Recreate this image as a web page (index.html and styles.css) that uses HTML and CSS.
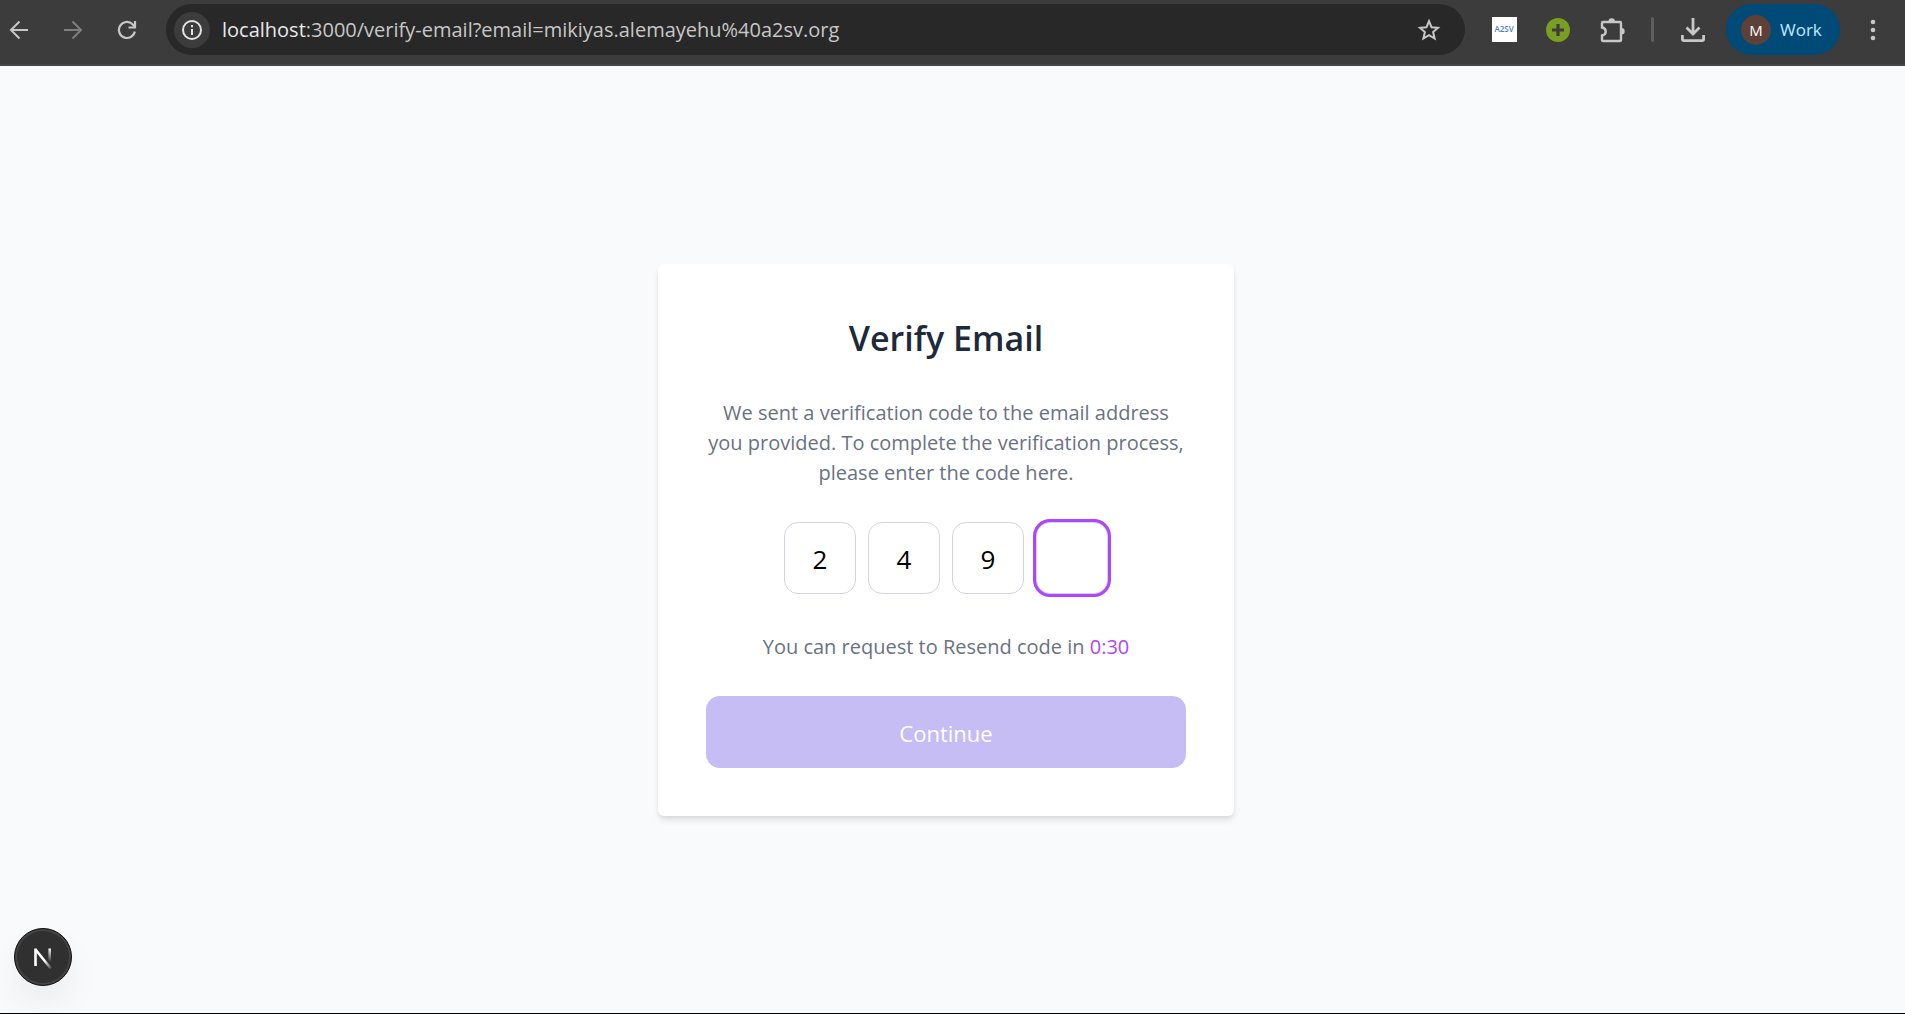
FILE: index.html
```html
<!DOCTYPE html>
<html lang="en">
<head>
<meta charset="utf-8">
<meta name="viewport" content="width=device-width, initial-scale=1">
<title>Verify Email</title>
<link rel="stylesheet" href="styles.css">
</head>
<body>
<header class="toolbar">
  <nav class="group" aria-label="Navigation">
    <button class="icon-button" type="button" aria-label="Back">
      <svg width="20" height="20" viewBox="0 0 20 20" fill="none" stroke="currentColor" stroke-width="2"><path d="M19 10H2.500M10.500 1.500L2 10l8.500 8.500"/></svg>
    </button>
    <button class="icon-button dim" type="button" aria-label="Forward">
      <svg width="20" height="20" viewBox="0 0 20 20" fill="none" stroke="currentColor" stroke-width="2"><path d="M1 10h16.500M9.500 1.500L18 10l-8.500 8.500"/></svg>
    </button>
    <button class="icon-button" type="button" aria-label="Reload">
      <svg width="20" height="20" viewBox="0 0 20 20" fill="none" stroke="currentColor" stroke-width="2.200"><path d="M17.800 11.500A8 8 0 1 1 15.500 4.200L18 6.800"/><path d="M18 1v6.500h-6.500"/></svg>
    </button>
  </nav>
  <div class="address">
    <button class="site-info" type="button" aria-label="Site information">
      <svg width="22" height="22" viewBox="0 0 22 22" fill="none" stroke="currentColor" stroke-width="2"><circle cx="11" cy="11" r="9"/><path d="M11 10v6M11 6v2.200"/></svg>
    </button>
    <p class="url"><span class="host">localhost</span>:3000/verify-email?email=mikiyas.alemayehu%40a2sv.org</p>
    <button class="icon-button" type="button" aria-label="Bookmark">
      <svg width="24" height="24" viewBox="0 0 24 24" fill="none" stroke="currentColor" stroke-width="2"><path d="M12 3.200l2.500 6 6.500.600-4.900 4.300 1.500 6.400L12 17.100l-5.600 3.400 1.500-6.400L3 9.800l6.500-.600z"/></svg>
    </button>
  </div>
  <div class="group extensions">
    <button class="icon-button" type="button" aria-label="A2SV"><span class="tile">A2SV</span></button>
    <button class="icon-button" type="button" aria-label="Add">
      <svg width="24" height="24" viewBox="0 0 24 24"><circle cx="12" cy="12" r="12" fill="#7a9e22"/><path d="M12 6v12M6 12h12" stroke="#3c3c3c" stroke-width="3.200"/></svg>
    </button>
    <button class="icon-button" type="button" aria-label="Extensions">
      <svg width="26" height="26" viewBox="0 0 26 26"><path d="M4 5h17a1 1 0 0 1 1 1v17a1 1 0 0 1-1 1H4a1 1 0 0 1-1-1v-4.500c5-.800 5-7.200 0-8V6a1 1 0 0 1 1-1z" fill="none" stroke="currentColor" stroke-width="2.400"/><path d="M9.500 4.500a3.200 3.200 0 0 1 6.400 0zM22.500 11a3.200 3.200 0 0 1 0 6.400z" fill="currentColor"/></svg>
    </button>
  </div>
  <span class="divider"></span>
  <button class="icon-button" type="button" aria-label="Downloads">
    <svg width="26" height="26" viewBox="0 0 26 26" fill="none" stroke="currentColor" stroke-width="2.800"><path d="M13 1v16M6.500 10.500L13 17l6.500-6.500M2.400 18v4.600a1 1 0 0 0 1 1h19.200a1 1 0 0 0 1-1V18"/></svg>
  </button>
  <button class="profile" type="button"><span class="avatar">M</span>Work</button>
  <button class="icon-button" type="button" aria-label="Menu">
    <svg width="6" height="22" viewBox="0 0 6 22" fill="currentColor"><circle cx="3" cy="3" r="2.300"/><circle cx="3" cy="11" r="2.300"/><circle cx="3" cy="19" r="2.300"/></svg>
  </button>
</header>

<main class="page">
  <form class="card">
    <h1 class="title">Verify Email</h1>
    <p class="text intro">We sent a verification code to the email address<br>you provided. To complete the verification process,<br>please enter the code here.</p>
    <div class="code">
      <input class="digit" type="text" inputmode="numeric" maxlength="1" value="2" aria-label="Digit 1">
      <input class="digit" type="text" inputmode="numeric" maxlength="1" value="4" aria-label="Digit 2">
      <input class="digit" type="text" inputmode="numeric" maxlength="1" value="9" aria-label="Digit 3">
      <input class="digit active" type="text" inputmode="numeric" maxlength="1" aria-label="Digit 4">
    </div>
    <p class="text">You can request to Resend code in <span class="timer">0:30</span></p>
    <button class="continue" type="submit" disabled>Continue</button>
  </form>
</main>

<button class="dev-badge" type="button" aria-label="Open Next.js Dev Tools">
  <svg width="20" height="24" viewBox="0 0 20 24" fill="none">
    <defs>
      <linearGradient id="diagonal" x1="12" y1="15" x2="18" y2="24" gradientUnits="userSpaceOnUse"><stop stop-color="#fff"/><stop offset="1" stop-color="#fff" stop-opacity="0.100"/></linearGradient>
      <linearGradient id="stem" x1="0" y1="3" x2="0" y2="17" gradientUnits="userSpaceOnUse"><stop stop-color="#fff"/><stop offset="1" stop-color="#fff" stop-opacity="0"/></linearGradient>
    </defs>
    <path d="M2.500 3.500V21" stroke="#fff" stroke-width="2.600"/>
    <path d="M2.500 4.500L17.800 23.500" stroke="url(#diagonal)" stroke-width="2.600"/>
    <path d="M16.700 3.500v14" stroke="url(#stem)" stroke-width="2.600"/>
  </svg>
</button>
</body>
</html>
```
FILE: styles.css
```css
* {
  box-sizing: border-box;
}

body {
  margin: 0;
  min-height: 100vh;
  display: flex;
  flex-direction: column;
  background: #f9fafb;
  border-bottom: 1px solid #000;
  font-family: "Open Sans", "Noto Sans", sans-serif;
}

h1,
p {
  margin: 0;
}

button {
  border: 0;
  padding: 0;
  background: none;
  color: inherit;
  font: inherit;
}

.toolbar {
  display: flex;
  align-items: center;
  height: 66px;
  padding: 0 13px 5px 0;
  background: #3c3c3c;
  border-bottom: 2px solid #464749;
  color: #c7c7c7;
}

.group {
  display: flex;
  gap: 16px;
}

.icon-button {
  display: flex;
  align-items: center;
  justify-content: center;
  flex: none;
  width: 38px;
  height: 38px;
}

.dim {
  color: #7f7f7f;
}

.address {
  flex: 1;
  min-width: 0;
  display: flex;
  align-items: center;
  height: 51px;
  margin: 0 20px;
  padding: 0 17px 0 8px;
  border-radius: 26px;
  background: #282828;
}

.site-info {
  display: flex;
  align-items: center;
  justify-content: center;
  flex: none;
  width: 36px;
  height: 36px;
  border-radius: 50%;
  background: #3c3c3c;
  color: #e3e3e3;
}

.url {
  flex: 1;
  overflow: hidden;
  margin-left: 12px;
  font-size: 20px;
  line-height: 30px;
  white-space: nowrap;
}

.host {
  color: #e8e8e8;
}

.tile {
  width: 25px;
  height: 25px;
  background: #fff;
  color: #4a7fc0;
  font-size: 8px;
  font-weight: 600;
  line-height: 24px;
  text-align: center;
}

.divider {
  width: 3px;
  height: 25px;
  margin: 0 20px;
  border-radius: 2px;
  background: #5e5e5e;
}

.profile {
  display: flex;
  align-items: center;
  gap: 9px;
  height: 51px;
  width: 114px;
  margin: 0 14px;
  padding-left: 15px;
  border-radius: 26px;
  background: #004a77;
  color: #c2e7ff;
  font-size: 17px;
}

.avatar {
  width: 30px;
  height: 30px;
  border-radius: 50%;
  background: #5d4037;
  color: #fff;
  font-size: 15px;
  line-height: 30px;
}

.page {
  flex: 1;
  display: flex;
  align-items: center;
  justify-content: center;
  padding-right: 13px;
}

.card {
  width: 576px;
  max-width: 100%;
  padding: 48px;
  border-radius: 6px;
  background: #fff;
  box-shadow: 0 5px 7px -1px rgba(0, 0, 0, 0.1), 0 2px 5px -2px rgba(0, 0, 0, 0.1);
  text-align: center;
}

.title {
  color: #1e2939;
  font-size: 34px;
  line-height: 52px;
  font-weight: 600;
}

.text {
  color: #6a7282;
  font-size: 20px;
  line-height: 30px;
}

.intro {
  margin-top: 34px;
}

.code {
  display: flex;
  justify-content: center;
  gap: 12px;
  margin: 34px 0 38px;
}

.digit {
  width: 72px;
  height: 72px;
  padding: 2px 0 0;
  border: 1px solid #d1d5dc;
  border-radius: 14px;
  background: #fff;
  color: #000;
  font: inherit;
  font-size: 26px;
  text-align: center;
}

.active {
  box-shadow: 0 0 0 3px #ad46ff;
}

.timer {
  color: #ad46ff;
}

.continue {
  width: 100%;
  height: 72px;
  margin-top: 34px;
  padding-top: 2px;
  border-radius: 14px;
  background: #c5bdf4;
  color: #fff;
  font-size: 22px;
}

.dev-badge {
  position: fixed;
  left: 14px;
  bottom: 28px;
  display: flex;
  align-items: center;
  justify-content: center;
  width: 58px;
  height: 58px;
  border: 1px solid #111;
  border-radius: 50%;
  background: #303030;
  box-shadow: inset 0 0 0 2px #444, 0 19px 38px -8px rgba(0, 0, 0, 0.1);
}
```
